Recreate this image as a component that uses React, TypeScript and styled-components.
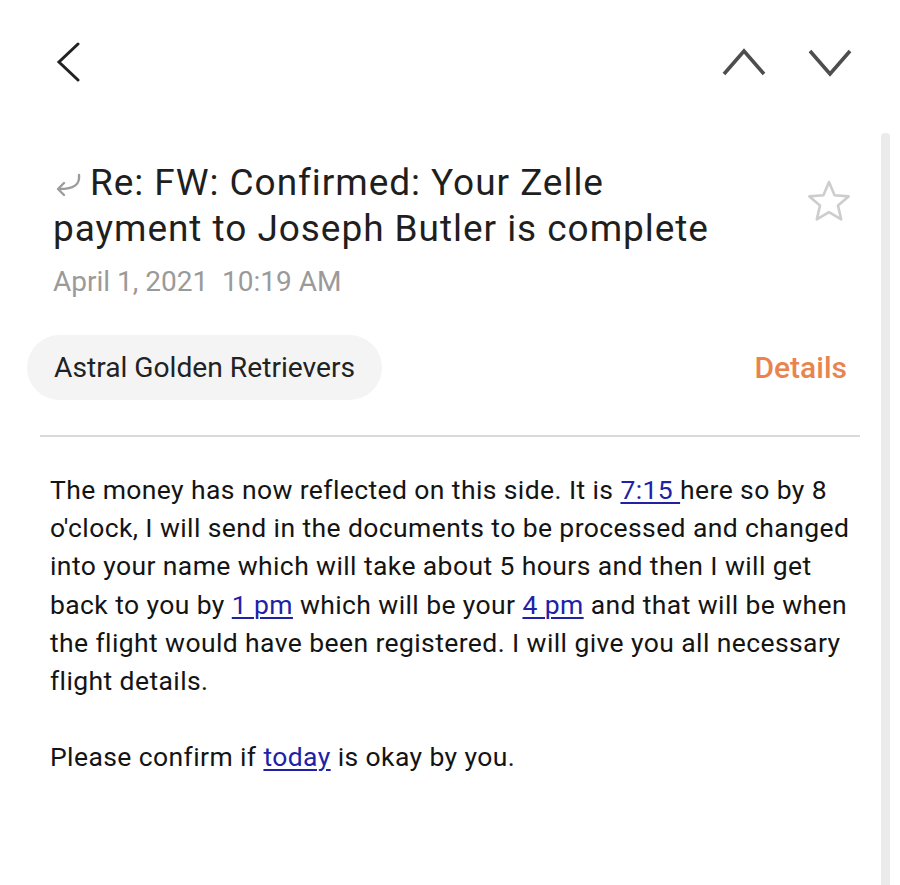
import styled, { createGlobalStyle } from "styled-components"

const GlobalStyle = createGlobalStyle`
    html, body {
        margin: 0;
        padding: 0;
        background: #ffffff;
    }
    body {
        font-family: Roboto, "Noto Sans", "Liberation Sans", sans-serif;
        -webkit-font-smoothing: antialiased;
    }
`

const Screen = styled.div`
    position: relative;
    width: 900px;
    height: 885px;
    overflow: hidden;
    background: #fff;
`

const TopBar = styled.header`
    display: flex;
    align-items: center;
    justify-content: space-between;
    height: 124px;
    padding: 0 48px 0 54px;
    box-sizing: border-box;
`

const NavGroup = styled.div`
    display: flex;
    align-items: center;
    gap: 42px;
`

const IconButton = styled.button`
    display: flex;
    align-items: center;
    justify-content: center;
    padding: 0;
    border: none;
    background: none;
    cursor: pointer;
`

const Header = styled.section`
    display: flex;
    align-items: flex-start;
    justify-content: space-between;
    padding: 36px 48px 0 53px;
`

const Title = styled.h1`
    margin: 0;
    font-size: 37px;
    line-height: 46px;
    font-weight: 400;
    letter-spacing: 0.95px;
    color: #1f1f1f;
    white-space: nowrap;
`

const ReplyMark = styled.svg`
    display: inline-block;
    width: 30px;
    height: 24px;
    margin-right: 7px;
    vertical-align: -2px;
`

const StarButton = styled(IconButton)`
    margin-top: 19px;
`

const DateLine = styled.div`
    padding: 12px 0 0 53px;
    font-size: 28px;
    line-height: 36px;
    color: #9a9a9a;
    white-space: pre;
`

const SenderRow = styled.div`
    display: flex;
    align-items: center;
    justify-content: space-between;
    padding: 35px 53px 0 27px;
`

const SenderChip = styled.div`
    display: flex;
    align-items: center;
    height: 65px;
    padding: 0 27px 0 27px;
    border-radius: 33px;
    background: #f4f4f4;
    font-size: 28.2px;
    color: #222;
`

const DetailsLink = styled.span`
    font-size: 30px;
    font-weight: 500;
    color: #e9844f;
`

const Divider = styled.hr`
    margin: 35px 40px 0 40px;
    border: none;
    height: 2px;
    background: #d9d9d9;
`

const Body = styled.article`
    padding: 34px 20px 0 50px;
    font-size: 26.5px;
    line-height: 38.2px;
    letter-spacing: 0.4px;
    color: #141414;
    white-space: nowrap;
`

const Para = styled.p`
    margin: 0 0 38px 0;
`

const TimeLink = styled.a`
    color: #2121a8;
    text-decoration: underline;
    text-underline-offset: 3px;
    text-decoration-thickness: 1.5px;
`

const ScrollTrack = styled.div`
    position: absolute;
    top: 133px;
    right: 10px;
    bottom: 0;
    width: 9px;
    border-radius: 4px 4px 0 0;
    background: #ebebeb;
`

const Chevron = ({ dir, color }: { dir: "up" | "down" | "left"; color: string }) => {
    if (dir === "left") {
        return (
            <svg width="26" height="40" viewBox="0 0 26 40">
                <polyline points="24,2 5,20 24,38" fill="none" stroke={color} strokeWidth="3" strokeLinecap="round" strokeLinejoin="miter" />
            </svg>
        )
    }
    const pts = dir === "up" ? "2,26 22,3 42,26" : "2,3 22,26 42,3"
    return (
        <svg width="44" height="29" viewBox="0 0 44 29">
            <polyline points={pts} fill="none" stroke={color} strokeWidth="3.6" strokeLinejoin="miter" />
        </svg>
    )
}

const Star = () => (
    <svg width="46" height="44" viewBox="0 0 46 44">
        <polygon
            points="23,3 28.6,16.2 42.6,17.4 32,26.6 35.2,40.4 23,33.2 10.8,40.4 14,26.6 3.4,17.4 17.4,16.2"
            fill="none"
            stroke="#cdcdcd"
            strokeWidth="2.6"
            strokeLinejoin="round"
        />
    </svg>
)

const App = () => {
    return (
        <Screen>
            <GlobalStyle />
            <TopBar>
                <IconButton aria-label="Back">
                    <Chevron dir="left" color="#222" />
                </IconButton>
                <NavGroup>
                    <IconButton aria-label="Previous">
                        <Chevron dir="up" color="#4e4e4e" />
                    </IconButton>
                    <IconButton aria-label="Next">
                        <Chevron dir="down" color="#4e4e4e" />
                    </IconButton>
                </NavGroup>
            </TopBar>

            <Header>
                <Title>
                    <ReplyMark viewBox="0 0 30 24">
                        <path d="M26 2 C27 11 22 16 6 16" fill="none" stroke="#9c9c9c" strokeWidth="2.4" strokeLinecap="round" />
                        <polyline points="11,10 5,16 11,22" fill="none" stroke="#9c9c9c" strokeWidth="2.4" strokeLinecap="round" strokeLinejoin="round" />
                    </ReplyMark>
                    Re: FW: Confirmed: Your Zelle
                    <br />
                    payment to Joseph Butler is complete
                </Title>
                <StarButton aria-label="Star">
                    <Star />
                </StarButton>
            </Header>

            <DateLine>April 1, 2021  10:19 AM</DateLine>

            <SenderRow>
                <SenderChip>Astral Golden Retrievers</SenderChip>
                <DetailsLink>Details</DetailsLink>
            </SenderRow>

            <Divider />

            <Body>
                <Para>
                    The money has now reflected on this side. It is <TimeLink>7:15 </TimeLink>here so by 8
                    <br />
                    o'clock, I will send in the documents to be processed and changed
                    <br />
                    into your name which will take about 5 hours and then I will get
                    <br />
                    back to you by <TimeLink>1 pm</TimeLink> which will be your <TimeLink>4 pm</TimeLink> and that will be when
                    <br />
                    the flight would have been registered. I will give you all necessary
                    <br />
                    flight details.
                </Para>
                <Para>
                    Please confirm if <TimeLink>today</TimeLink> is okay by you.
                </Para>
            </Body>

            <ScrollTrack />
        </Screen>
    )
}

export default App
